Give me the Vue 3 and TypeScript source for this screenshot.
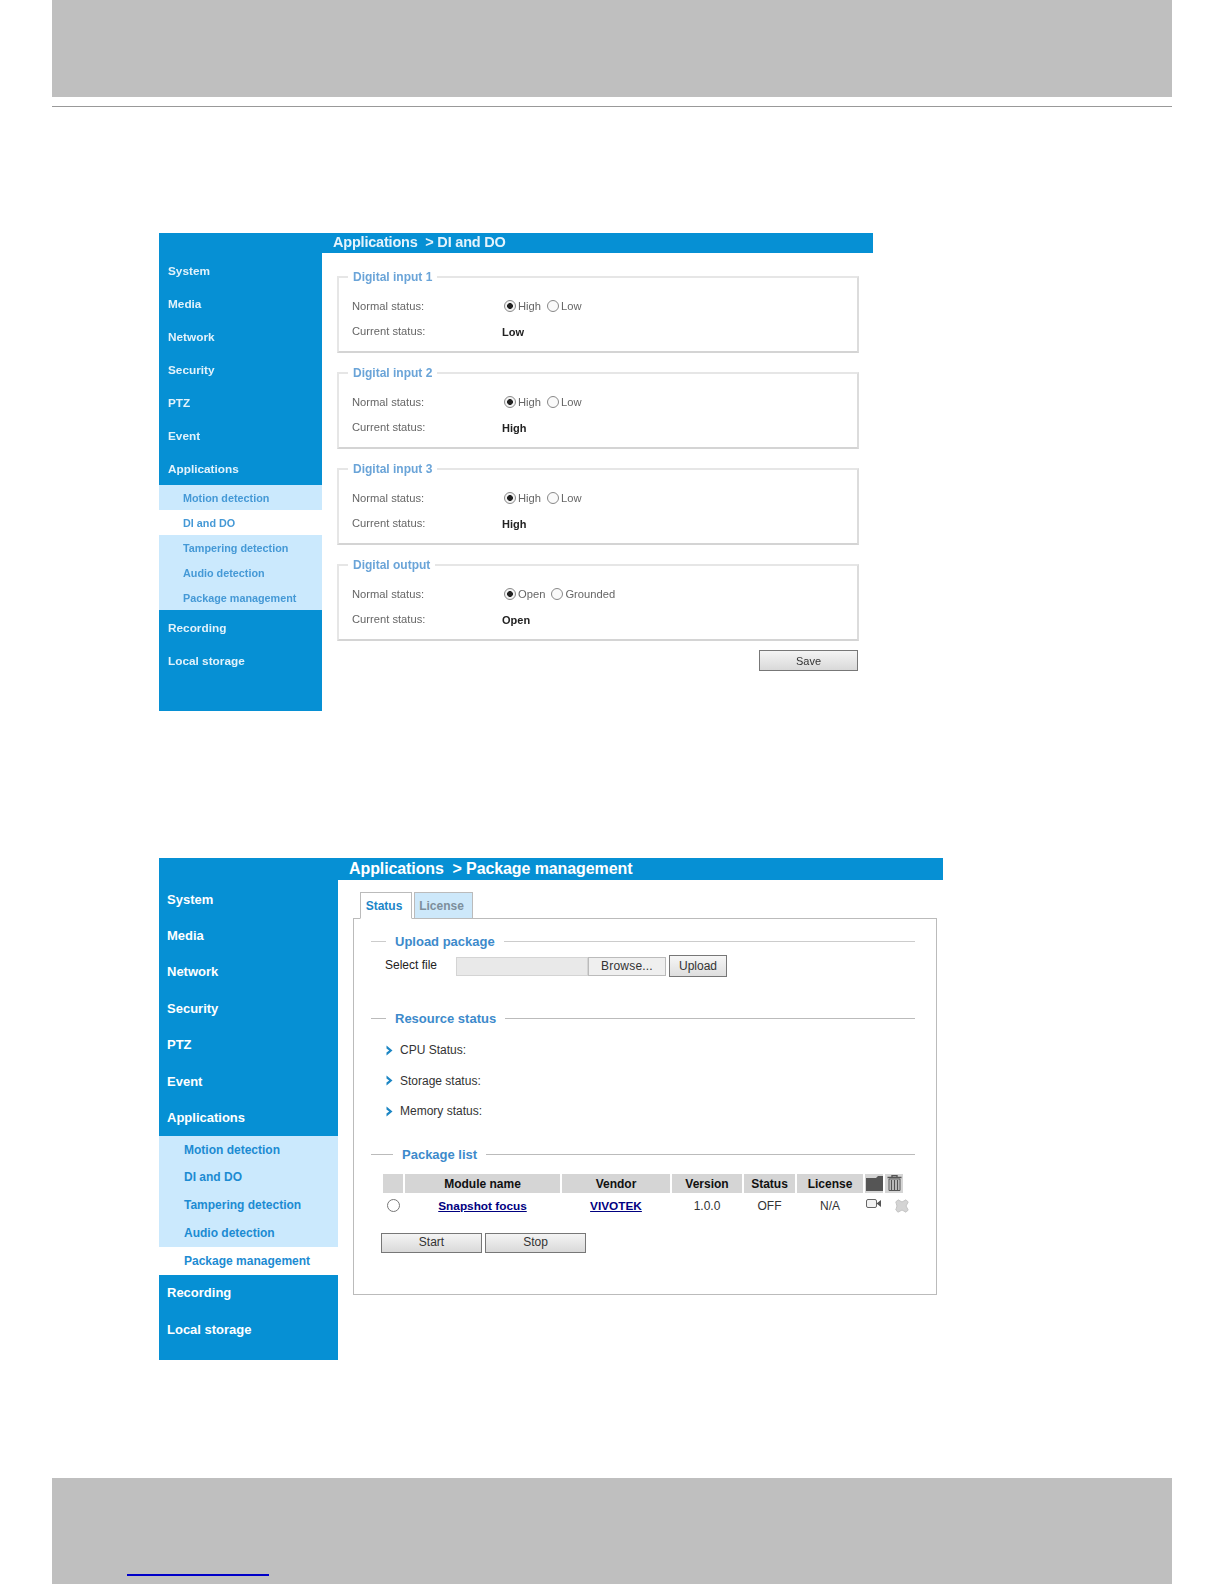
<script setup lang="ts">
const menuTop = ['System', 'Media', 'Network', 'Security', 'PTZ', 'Event', 'Applications']
const menuSub = ['Motion detection', 'DI and DO', 'Tampering detection', 'Audio detection', 'Package management']
const menuEnd = ['Recording', 'Local storage']

const groups = [
  { title: 'Digital input 1', on: 'High', off: 'Low', value: 'Low' },
  { title: 'Digital input 2', on: 'High', off: 'Low', value: 'High' },
  { title: 'Digital input 3', on: 'High', off: 'Low', value: 'High' },
  { title: 'Digital output', on: 'Open', off: 'Grounded', value: 'Open' },
]

const statuses = ['CPU Status:', 'Storage status:', 'Memory status:']

const columns = [
  { label: '', width: 20 },
  { label: 'Module name', width: 155 },
  { label: 'Vendor', width: 108 },
  { label: 'Version', width: 70 },
  { label: 'Status', width: 51 },
  { label: 'License', width: 66 },
]
</script>

<template>
  <div class="page">
    <div class="band band-top"></div>
    <div class="rule"></div>

    <section class="shot shot-a">
      <div class="bar">Applications&nbsp; &gt; DI and DO</div>
      <div class="body">
        <nav class="side">
          <a v-for="m in menuTop" :key="m" class="item">{{ m }}</a>
          <div class="subs">
            <a v-for="s in menuSub" :key="s" class="sub" :class="{ current: s === 'DI and DO' }">{{ s }}</a>
          </div>
          <a v-for="m in menuEnd" :key="m" class="item">{{ m }}</a>
        </nav>
        <main class="content">
          <fieldset v-for="g in groups" :key="g.title" class="group">
            <legend>{{ g.title }}</legend>
            <div class="line">
              <span class="label">Normal status:</span>
              <span class="choices">
                <input type="radio" class="radio" :name="g.title" checked />
                <span>{{ g.on }}</span>
                <input type="radio" class="radio second" :name="g.title" />
                <span>{{ g.off }}</span>
              </span>
            </div>
            <div class="line">
              <span class="label">Current status:</span>
              <strong class="value">{{ g.value }}</strong>
            </div>
          </fieldset>
          <div class="save-row"><button class="btn save">Save</button></div>
        </main>
      </div>
    </section>

    <section class="shot shot-b">
      <div class="bar">Applications&nbsp; &gt; Package management</div>
      <div class="body">
        <nav class="side">
          <a v-for="m in menuTop" :key="m" class="item">{{ m }}</a>
          <div class="subs">
            <a v-for="s in menuSub" :key="s" class="sub" :class="{ current: s === 'Package management' }">{{ s }}</a>
          </div>
          <a v-for="m in menuEnd" :key="m" class="item">{{ m }}</a>
        </nav>
        <main class="content">
          <div class="tabs">
            <span class="tab active">Status</span>
            <span class="tab">License</span>
          </div>
          <div class="panel">
            <h3 class="heading"><span>Upload package</span></h3>
            <div class="upload">
              <span class="select">Select file</span>
              <span class="file"></span>
              <button class="browse">Browse...</button>
              <button class="btn up">Upload</button>
            </div>

            <h3 class="heading resource"><span>Resource status</span></h3>
            <ul class="status-list">
              <li v-for="s in statuses" :key="s">
                <svg width="7" height="11" viewBox="0 0 7 11" class="arrow">
                  <path d="M0.5 0.5 L6.5 5.5 L0.5 10.5 V7.6 L3.2 5.5 L0.5 3.4 Z" fill="#1c86c4" />
                </svg>
                <span>{{ s }}</span>
              </li>
            </ul>

            <h3 class="heading list"><span>Package list</span></h3>
            <table class="packages">
              <thead>
                <tr>
                  <th v-for="c in columns" :key="c.label" :style="{ width: c.width + 'px' }">{{ c.label }}</th>
                  <th class="icon-head">
                    <svg width="17" height="15" viewBox="0 0 17 15">
                      <path d="M0 2 H10 L12 0 H17 V15 H0 Z" fill="#555" />
                    </svg>
                  </th>
                  <th class="icon-head">
                    <svg width="15" height="16" viewBox="0 0 15 16">
                      <path d="M5 2 V0.5 H10 V2 M0.5 2.5 H14.5" stroke="#555" fill="none" stroke-width="1.4" />
                      <path d="M2 4 H13 V15.5 H2 Z" fill="none" stroke="#555" />
                      <path d="M4.5 5 V15 M7.5 5 V15 M10.5 5 V15" stroke="#555" stroke-width="1.4" />
                    </svg>
                  </th>
                </tr>
              </thead>
              <tbody>
                <tr>
                  <td><input type="radio" class="radio large" name="pkg" /></td>
                  <td><a class="link">Snapshot focus</a></td>
                  <td><a class="link">VIVOTEK</a></td>
                  <td>1.0.0</td>
                  <td>OFF</td>
                  <td>N/A</td>
                  <td class="icon-cell">
                    <svg width="15" height="9" viewBox="0 0 15 9" class="cam">
                      <rect x="0.5" y="0.5" width="10" height="8" rx="1.5" fill="#f2f2f2" stroke="#666" />
                      <path d="M10.5 4.5 L15 1 V8 Z" fill="#555" />
                    </svg>
                  </td>
                  <td class="icon-cell">
                    <svg width="14" height="14" viewBox="0 0 14 14" class="remove">
                      <path d="M2 7 L0.8 3 L3 0.8 L7 3 L11 0.8 L13.2 3 L11 7 L13.2 11 L11 13.2 L7 11 L3 13.2 L0.8 11 Z" fill="#d4d4d4" stroke="#c4c4c4" />
                    </svg>
                  </td>
                </tr>
              </tbody>
            </table>
            <div class="actions">
              <button class="btn act">Start</button>
              <button class="btn act">Stop</button>
            </div>
          </div>
        </main>
      </div>
    </section>

    <div class="band band-bottom"><span class="url"></span></div>
  </div>
</template>

<style>
html,
body {
  margin: 0;
  background: #fff;
}
</style>

<style scoped>
.page {
  width: 1224px;
  height: 1584px;
  overflow: hidden;
  display: flex;
  flex-direction: column;
  font-family: "Liberation Sans", Arial, sans-serif;
  color: #333;
}

.band {
  width: 1120px;
  margin-left: 52px;
  background: #bfbfbf;
  flex: none;
}
.band-top {
  height: 97px;
}
.rule {
  width: 1120px;
  margin: 9px 0 0 52px;
  height: 1px;
  background: #999;
  flex: none;
}
.band-bottom {
  height: 106px;
  margin-top: 118px;
  box-sizing: border-box;
  padding: 96px 0 0 75px;
}
.url {
  display: block;
  width: 142px;
  height: 2px;
  background: #0000c8;
}

.shot {
  margin-left: 159px;
  display: flex;
  flex-direction: column;
  flex: none;
  background: #fff;
}
.shot-a {
  width: 714px;
  height: 478px;
  margin-top: 126px;
  filter: blur(0.45px);
}
.shot-b {
  width: 784px;
  height: 502px;
  margin-top: 147px;
}

.bar {
  background: #0690d4;
  color: #fff;
  font-weight: 700;
  white-space: nowrap;
  flex: none;
}
.shot-a .bar {
  height: 20px;
  line-height: 19px;
  font-size: 14.5px;
  letter-spacing: -0.2px;
  padding-left: 174px;
  color: #e4f3fc;
}
.shot-b .bar {
  height: 22px;
  line-height: 21px;
  font-size: 16px;
  letter-spacing: -0.1px;
  padding-left: 190px;
}

.body {
  display: flex;
  flex: 1;
  min-height: 0;
}
.side {
  background: #0690d4;
  flex: none;
  display: flex;
  flex-direction: column;
}
.shot-a .side {
  width: 163px;
  padding-top: 1px;
}
.shot-b .side {
  width: 179px;
  padding-top: 1px;
}
.item {
  color: #fff;
  font-weight: 700;
  display: flex;
  align-items: center;
}
.shot-a .item {
  height: 33px;
  font-size: 11.8px;
  padding-left: 9px;
  color: #e2f2fb;
}
.shot-b .item {
  height: 36.4px;
  font-size: 13px;
  padding-left: 8px;
}
.subs {
  background: #cbe9fd;
}
.shot-a .subs {
  margin-bottom: 1px;
}
.sub {
  display: flex;
  align-items: center;
  color: #1c8bd2;
  font-weight: 700;
}
.shot-a .sub {
  height: 25px;
  font-size: 10.8px;
  padding-left: 24px;
  color: #4599d6;
}
.shot-b .sub {
  height: 27.8px;
  font-size: 12px;
  padding-left: 25px;
}
.sub.current {
  background: #fff;
}

/* first screenshot */
.shot-a .content {
  padding: 17px 0 0 15px;
  width: 522px;
}
.group {
  box-sizing: border-box;
  width: 522px;
  height: 83px;
  margin: 0 0 13px;
  padding: 9px 0 0 13px;
  border: 2px solid #e6e6e6;
  border-bottom-color: #d4d4d4;
  border-right-color: #dcdcdc;
  min-width: 0;
}
.group:last-of-type {
  margin-bottom: 0;
}
.group legend {
  margin-left: -4px;
  padding: 0 5px;
  color: #6aa4d8;
  font-size: 12px;
  font-weight: 700;
  line-height: 14px;
}
.line {
  display: flex;
  align-items: center;
  height: 25px;
  font-size: 11.2px;
  color: #666;
}
.label {
  width: 151px;
  flex: none;
}
.value {
  color: #222;
  font-size: 11px;
  margin-top: 2px;
  margin-left: -1px;
}
.choices {
  display: flex;
  align-items: center;
  padding-left: 1px;
}
.radio {
  appearance: none;
  box-sizing: border-box;
  width: 12px;
  height: 12px;
  margin: 0 2px 0 0;
  border: 1px solid #888;
  border-radius: 50%;
  background: #fafafa;
  flex: none;
}
.radio:checked {
  background: radial-gradient(circle, #222 0 2.6px, #f4f4f4 3.2px);
}
.radio.second {
  margin-left: 6px;
}
.radio.large {
  display: block;
  width: 13px;
  height: 13px;
  margin: 0 auto;
  border-color: #777;
  background: #fff;
}
.save-row {
  display: flex;
  justify-content: flex-end;
  margin-top: 9px;
  padding-right: 1px;
}
.btn {
  box-sizing: border-box;
  border: 1px solid #777;
  background: linear-gradient(#f4f4f4, #d9d9d9);
  font-family: inherit;
  font-size: 12px;
  color: #333;
  padding: 0;
}
.save {
  width: 99px;
  height: 21px;
  font-size: 11px;
}

/* second screenshot */
.shot-b .content {
  padding: 12px 0 0 15px;
}
.tabs {
  display: flex;
  gap: 2px;
  margin-left: 7px;
  position: relative;
  z-index: 1;
  margin-bottom: -1px;
}
.tab {
  box-sizing: border-box;
  height: 27px;
  line-height: 26px;
  border: 1px solid #bbb;
  background: #cde8fa;
  color: #7d8f9c;
  font-size: 12px;
  font-weight: 700;
  width: 59px;
  padding-right: 4px;
  text-align: center;
}
.tab.active {
  background: #fff;
  color: #1c86c8;
  width: 52px;
  border-bottom-color: #fff;
}
.panel {
  box-sizing: border-box;
  width: 584px;
  height: 377px;
  border: 1px solid #bbb;
  padding: 14px 21px 0 17px;
}
.heading {
  display: flex;
  align-items: center;
  height: 16px;
  margin: 0;
  font-size: 13px;
  font-weight: 700;
  color: #3d8acb;
}
.heading::before {
  content: "";
  width: 15px;
  height: 1px;
  background: #ccc;
  margin-right: 9px;
  flex: none;
}
.heading::after {
  content: "";
  flex: 1;
  height: 1px;
  background: #ccc;
  margin-left: 9px;
}
.heading.resource {
  margin-top: 33px;
}
.heading.list {
  margin-top: 20px;
}
.heading.list::before {
  width: 22px;
}
.heading.resource::before,
.heading.resource::after,
.heading.list::before,
.heading.list::after {
  background: #bbb;
}
.upload {
  display: flex;
  align-items: center;
  height: 22px;
  margin-top: 6px;
  padding-left: 14px;
  font-size: 12px;
  color: #222;
}
.select {
  width: 71px;
  flex: none;
  position: relative;
  top: -1px;
}
.file {
  box-sizing: border-box;
  width: 132px;
  height: 19px;
  background: #e9e9e9;
  border: 1px solid #d4d4d4;
}
.browse {
  box-sizing: border-box;
  width: 78px;
  height: 19px;
  padding: 0;
  border: 1px solid #bbb;
  background: #efefef;
  color: #333;
  font-family: inherit;
  font-size: 12px;
  letter-spacing: 0.2px;
}
.up {
  width: 58px;
  height: 22px;
  margin-left: 3px;
  background: linear-gradient(#f6f6f6, #dedede);
}
.status-list {
  list-style: none;
  margin: 9px 0 0;
  padding: 0 0 0 15px;
}
.status-list li {
  display: flex;
  align-items: center;
  height: 30.5px;
  font-size: 12px;
  color: #333;
}
.arrow {
  margin-right: 7px;
  flex: none;
}
.packages {
  table-layout: fixed;
  width: 524px;
  margin: 9px 0 0 10px;
  border-collapse: separate;
  border-spacing: 2px;
  font-size: 12px;
}
.packages th {
  height: 17px;
  padding: 2px 0 0;
  background: #d5d5d5;
  color: #111;
  font-weight: 700;
}
.packages th.icon-head {
  line-height: 0;
  height: 19px;
  padding: 0;
}
.packages td {
  height: 22px;
  padding: 0;
  text-align: center;
  color: #333;
}
.icon-cell {
  line-height: 0;
}
.icon-cell svg {
  position: relative;
}
.icon-cell .cam {
  left: -1px;
  top: -2px;
}
.icon-cell .remove {
  left: 8px;
}
.link {
  color: #00007f;
  font-weight: 700;
  font-size: 11.8px;
  text-decoration: underline;
}
.actions {
  display: flex;
  gap: 3px;
  margin: 14px 0 0 10px;
}
.act {
  width: 101px;
  height: 20px;
  padding-bottom: 2px;
}
</style>
